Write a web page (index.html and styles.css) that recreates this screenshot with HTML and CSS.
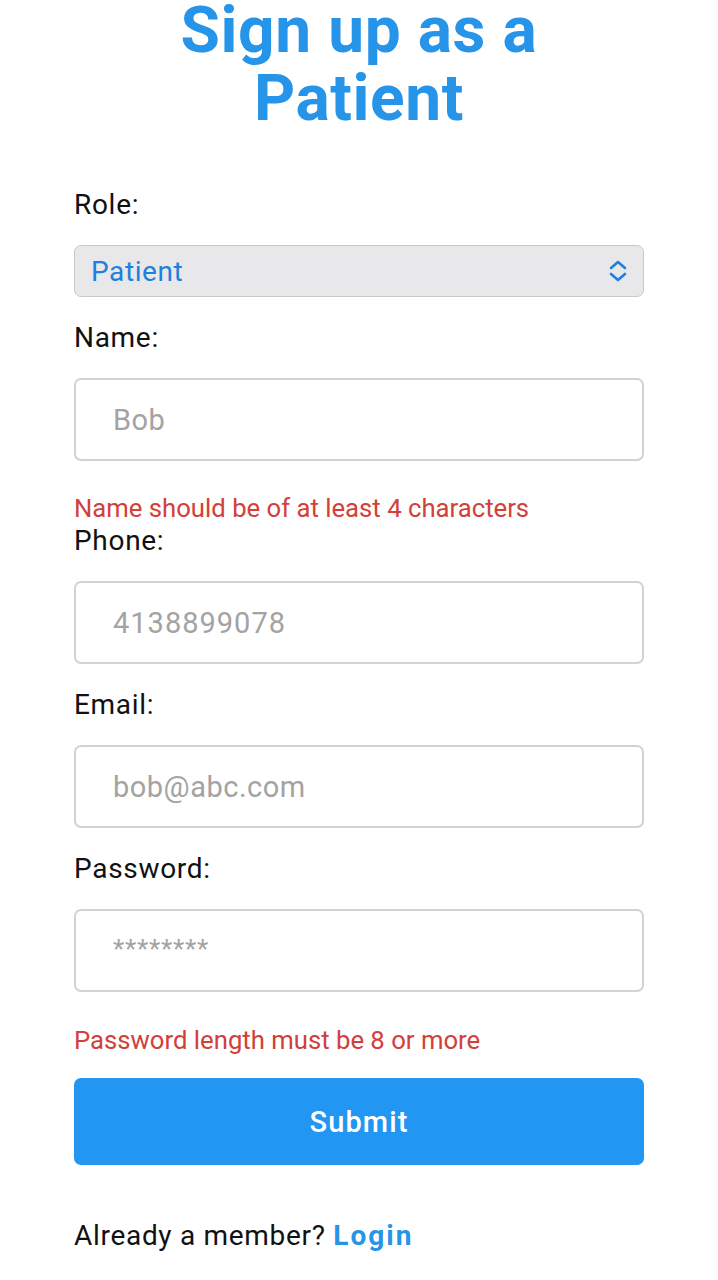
FILE: index.html
```html
<!DOCTYPE html>
<html lang="en">
<head>
<meta charset="utf-8">
<title>Sign up as a Patient</title>
<link rel="stylesheet" href="styles.css">
</head>
<body>
<main class="page">
  <h1 class="title">Sign up as a<br>Patient</h1>
  <form class="form">
    <label class="label">Role:</label>
    <div class="select">
      <span class="select-value">Patient</span>
      <svg class="chev" width="20" height="24" viewBox="0 0 20 24" fill="none" stroke="#1e80e0" stroke-width="2.6" stroke-linecap="round" stroke-linejoin="round">
        <polyline points="3,9 10,3 17,9"/>
        <polyline points="3,15 10,21 17,15"/>
      </svg>
    </div>

    <label class="label">Name:</label>
    <div class="input"><span class="ph">Bob</span></div>
    <p class="error">Name should be of at least 4 characters</p>

    <label class="label">Phone:</label>
    <div class="input"><span class="ph ph-num">4138899078</span></div>

    <label class="label">Email:</label>
    <div class="input"><span class="ph">bob@abc.com</span></div>

    <label class="label">Password:</label>
    <div class="input"><span class="ph ph-pw">********</span></div>
    <p class="error error-pw">Password length must be 8 or more</p>

    <button type="button" class="submit">Submit</button>

    <p class="footer">Already a member? <a class="login">Login</a></p>
  </form>
</main>
</body>
</html>
```

FILE: styles.css
```css
* { box-sizing: border-box; }
html, body { margin: 0; padding: 0; background: #ffffff; }
body { font-family: Roboto, "Noto Sans", Arial, sans-serif; color: #111; }

.page {
  width: 718px;
  padding: 0 74px;
  overflow: hidden;
  height: 1280px;
}

.title {
  margin: -3px 0 56px;
  font-size: 64px;
  line-height: 68px;
  font-weight: 700;
  color: #2594e9;
  text-align: center;
  letter-spacing: 0.6px;
}

.form { display: flex; flex-direction: column; }

.label {
  display: block;
  font-size: 28px;
  line-height: 32px;
  letter-spacing: 0.7px;
  margin-bottom: 24px;
  color: #111;
}

.select {
  height: 52px;
  background: #e8e8ea;
  border: 1.5px solid #c9c9cc;
  border-radius: 7px;
  display: flex;
  align-items: center;
  justify-content: space-between;
  padding: 0 15px 0 16px;
  margin-bottom: 25px;
}
.select-value { font-size: 28px; letter-spacing: 0.6px; color: #1e7fdf; }
.chev { display: block; }

.input {
  height: 83px;
  border: 2px solid #d2d2d4;
  border-radius: 7px;
  display: flex;
  align-items: center;
  padding-left: 37px;
  margin-bottom: 25px;
}
.ph { font-size: 29px; letter-spacing: 0.5px; color: #a3a3a3; }
.ph-num { letter-spacing: 1px; }
.ph-pw { font-size: 26px; letter-spacing: 0.8px; margin-top: -4px; }

.error {
  margin: 5px 0 0;
  font-size: 25.7px;
  line-height: 34px;
  color: #d2403a;
}
.error-pw { margin: 6px 0 21px; }

.submit {
  height: 87px;
  border: none;
  border-radius: 7px;
  background: #2196f3;
  color: #ffffff;
  font-family: Roboto, "Noto Sans", Arial, sans-serif;
  font-size: 29px;
  font-weight: 500;
  letter-spacing: 1.1px;
  padding: 0;
  margin: 0 0 55px;
}

.footer {
  margin: 0;
  font-size: 28px;
  line-height: 32px;
  letter-spacing: 0.7px;
  color: #111;
}
.login { color: #2594e9; font-weight: 700; letter-spacing: 2px; }
```
